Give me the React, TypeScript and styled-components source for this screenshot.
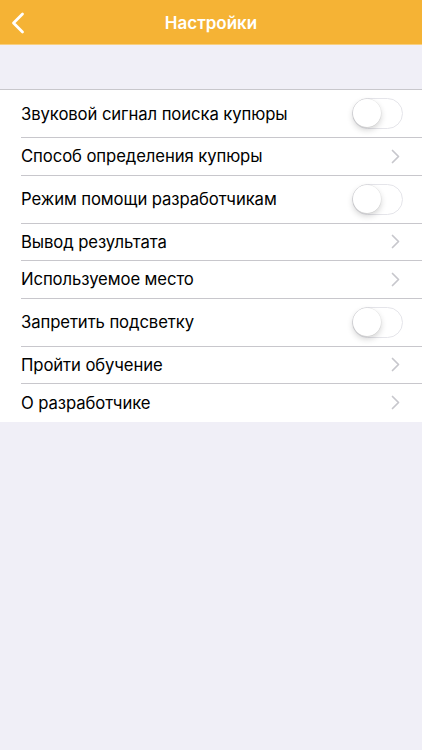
import styled, { createGlobalStyle } from 'styled-components';

const GlobalStyle = createGlobalStyle`
  html, body {
    margin: 0;
    padding: 0;
    background: #f0eff7;
  }
  body {
    font-family: Inter, "Noto Sans", sans-serif;
    -webkit-font-smoothing: antialiased;
  }
`;

const Page = styled.div`
  width: 422px;
  min-height: 750px;
  background: #f0eff7;
`;

const NavBar = styled.header`
  height: 45px;
  background: #f5b335;
  border-bottom: 1px solid #f8cf80;
  box-sizing: border-box;
  display: grid;
  grid-template-columns: 60px 1fr 60px;
  align-items: center;
`;

const BackButton = styled.button`
  border: 0;
  background: none;
  padding: 0 0 0 11px;
  height: 45px;
  display: flex;
  align-items: center;
  cursor: pointer;
`;

const Title = styled.h1`
  margin: 0;
  text-align: center;
  color: #fff;
  font-size: 17px;
  font-weight: 600;
  letter-spacing: 0;
`;

const Spacer = styled.div`
  height: 44px;
`;

const List = styled.ul`
  list-style: none;
  margin: 0;
  padding: 0;
  background: #fff;
  border-top: 1px solid #c8c7cc;
`;

const Row = styled.li<{ $tall?: boolean }>`
  height: ${(p) => (p.$tall ? '48px' : '37.5px')};
  padding-left: 21px;
  box-sizing: border-box;
`;

const RowInner = styled.div<{ $last?: boolean }>`
  height: 100%;
  display: flex;
  align-items: center;
  justify-content: space-between;
  padding-right: 19px;
  border-bottom: ${(p) => (p.$last ? 'none' : '1px solid #c8c7cc')};
  box-sizing: border-box;
`;

const Label = styled.span`
  font-size: 16.7px;
  color: #000;
  letter-spacing: -0.1px;
`;

const Switch = styled.span`
  position: relative;
  width: 51px;
  height: 31px;
  border-radius: 16px;
  border: 1.5px solid #e5e5ea;
  box-sizing: border-box;
  background: #fff;
`;

const Knob = styled.span`
  position: absolute;
  left: 0;
  top: 0;
  width: 28px;
  height: 28px;
  border-radius: 50%;
  background: #fff;
  box-shadow: 0 3px 6px rgba(0, 0, 0, 0.18), 0 0 0 0.5px rgba(0, 0, 0, 0.08);
`;

const Chevron = () => (
  <svg width="9" height="15" viewBox="0 0 9 15" style={{ marginRight: 3 }}>
    <path d="M1.5 1.5 L7.5 7.5 L1.5 13.5" fill="none" stroke="#c7c7cc" strokeWidth="1.7" strokeLinecap="round" strokeLinejoin="round" />
  </svg>
);

const BackIcon = () => (
  <svg width="14" height="22" viewBox="0 0 14 22">
    <path d="M11.5 2 L2.5 11 L11.5 20" fill="none" stroke="#fff" strokeWidth="2.8" strokeLinecap="round" strokeLinejoin="round" />
  </svg>
);

type Item = { label: string; kind: 'switch' | 'link' };

const items: Item[] = [
  { label: 'Звуковой сигнал поиска купюры', kind: 'switch' },
  { label: 'Способ определения купюры', kind: 'link' },
  { label: 'Режим помощи разработчикам', kind: 'switch' },
  { label: 'Вывод результата', kind: 'link' },
  { label: 'Используемое место', kind: 'link' },
  { label: 'Запретить подсветку', kind: 'switch' },
  { label: 'Пройти обучение', kind: 'link' },
  { label: 'О разработчике', kind: 'link' },
];

export default function App() {
  return (
    <Page>
      <GlobalStyle />
      <NavBar>
        <BackButton aria-label="Назад">
          <BackIcon />
        </BackButton>
        <Title>Настройки</Title>
        <div />
      </NavBar>
      <Spacer />
      <List>
        {items.map((item, i) => (
          <Row key={item.label} $tall={item.kind === 'switch'}>
            <RowInner $last={i === items.length - 1}>
              <Label>{item.label}</Label>
              {item.kind === 'switch' ? (
                <Switch>
                  <Knob />
                </Switch>
              ) : (
                <Chevron />
              )}
            </RowInner>
          </Row>
        ))}
      </List>
    </Page>
  );
}
